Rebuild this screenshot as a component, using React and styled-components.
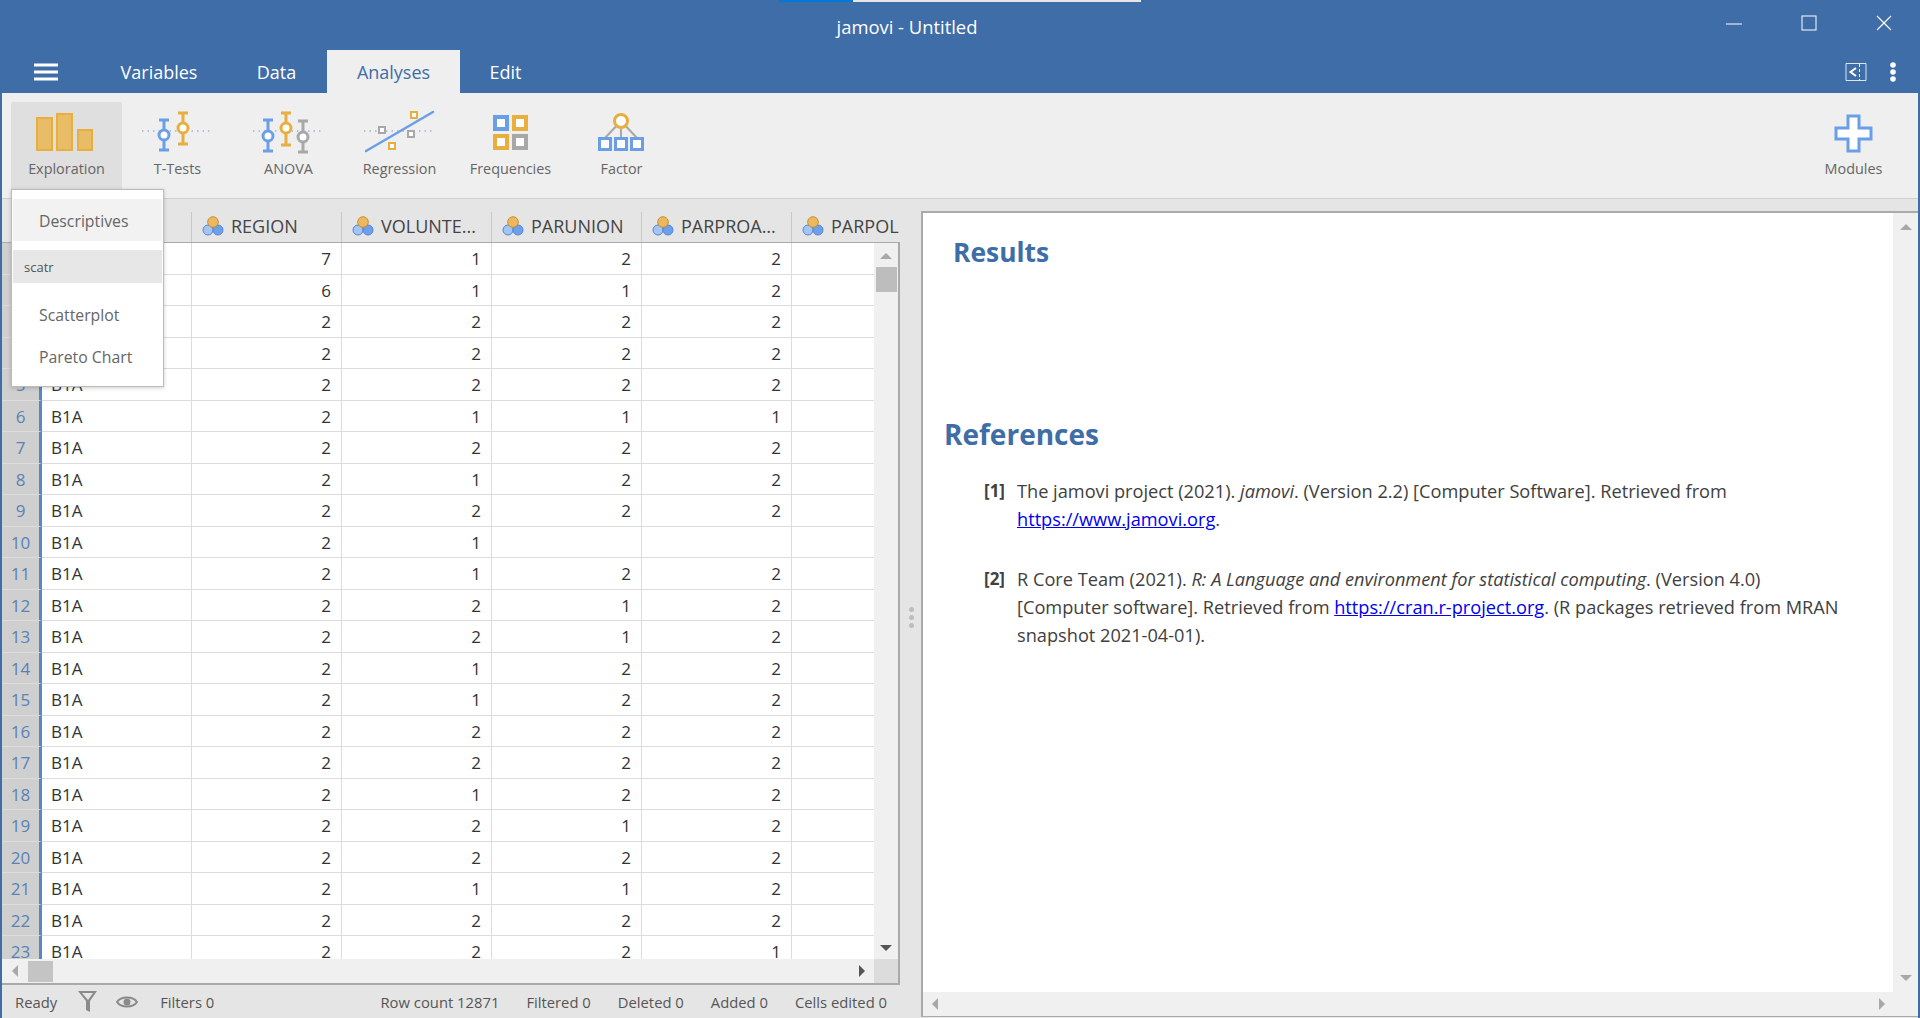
import React from 'react';
import styled, { createGlobalStyle } from 'styled-components';

const BLUE = '#3e6da8';
const FONT = `"Open Sans", "Noto Sans", sans-serif`;

const Global = createGlobalStyle`
  html, body { margin: 0; padding: 0; height: 100%; overflow: hidden; }
  body { font-family: ${FONT}; }
  * { box-sizing: border-box; }
`;

const Shell = styled.div`
  width: 1920px; height: 1018px; background: ${BLUE}; padding: 0 2px;
  display: flex; flex-direction: column; position: relative; overflow: hidden;
`;
const TitleBar = styled.div`
  height: 50px; position: relative; display: flex; align-items: center; justify-content: center;
  color: #fff; font-size: 18.4px; padding: 3px 106px 0 0;
`;
const Progress = styled.div`
  position: absolute; top: 0; left: 777px; width: 362px; height: 2px; display: flex;
`;
const ProgressPart = styled.div`
  height: 100%; width: ${p => p.$w}px; background: ${p => p.$c};
`;
const WinControls = styled.div`
  position: absolute; right: 26px; top: 15px; display: flex; gap: 59px;
`;
const TabBar = styled.div`
  height: 43px; display: flex; align-items: stretch; padding-right: 0;
`;
const Burger = styled.div`
  width: 90px; display: flex; align-items: center; padding-left: 32px;
`;
const Tab = styled.div`
  padding: 0 20px; display: flex; align-items: center; font-size: 18px; height: 43px;
  color: ${p => (p.$active ? BLUE : '#fff')};
  background: ${p => (p.$active ? '#efefef' : 'transparent')};
  width: ${p => p.$w}px; justify-content: center;
`;
const TabTools = styled.div`
  margin-left: auto; display: flex; align-items: center; gap: 23px; padding-right: 22px;
`;
const Ribbon = styled.div`
  height: 106px; flex: none; background: #efefef; display: flex; padding: 9px 9px 0 9px; border-bottom: 1px solid #cfcfcf;
`;
const RibbonButton = styled.div`
  width: 111px; height: 87px; padding-top: 3px; display: flex; flex-direction: column; align-items: center;
  background: ${p => (p.$active ? '#dfdfdf' : 'transparent')};
  border-radius: 2px 2px 0 0;
  margin-left: ${p => (p.$end ? 'auto' : '0')};
`;
const RibbonLabel = styled.div`
  font-size: 14.4px; line-height: 20px; color: #666;
`;
const Workspace = styled.div`
  flex: 1; display: flex; background: #e5e5e5; min-height: 0;
`;
const DataColumn = styled.div`
  width: 898px; display: flex; flex-direction: column;
`;
const HeaderRow = styled.div`
  margin-top: 13px; height: 30px; display: flex; overflow: hidden; flex: none;
`;
const HeaderCorner = styled.div`
  width: 40px; flex: none;
`;
const HeaderCell = styled.div`
  width: 150px; flex: none; display: flex; align-items: center; gap: 7px; padding: 0 0 2px 10px;
  border-right: 1px solid #c8c8c8; font-size: 18px; color: #444; white-space: nowrap;
`;
const TableBody = styled.div`
  height: 717px; flex: none; display: grid; grid-template-columns: 872px 24px;
  border-top: 1px solid #aaa; border-right: 2px solid #aaa; background: #fff;
`;
const RowsClip = styled.div`
  overflow: hidden; height: 716px;
`;
const Row = styled.div`
  height: 31.5px; display: flex; width: 900px;
`;
const RowNumber = styled.div`
  width: 40px; flex: none; background: #cfcfcf; border-right: 3px solid #5b86c4;
  border-bottom: 1px solid #dcdcdc; padding-top: 1px;
  color: #5a82b5; font-size: 17px; display: flex; align-items: center; justify-content: center;
`;
const Cell = styled.div`
  width: 150px; flex: none; border-right: 1px solid #dcdcdc; border-bottom: 1px solid #dcdcdc;
  color: #333; font-size: 17px; display: flex; align-items: center;
  justify-content: ${p => (p.$text ? 'flex-start' : 'flex-end')};
  padding: 1px 10px 0 ${p => (p.$text ? 9 : 10)}px;
`;
const VScroll = styled.div`
  background: #f0f0f0; display: flex; flex-direction: column; align-items: center; padding-top: 10px;
`;
const VThumb = styled.div`
  width: 21px; height: 25px; background: #bdbdbd; margin-top: 8px;
`;
const HScroll = styled.div`
  height: 26px; flex: none; display: flex; align-items: center; background: #f0f0f0; padding-left: 10px;
  border-right: 2px solid #aaa; border-bottom: 2px solid #aaa;
`;
const HThumb = styled.div`
  width: 25px; height: 21px; background: #c4c4c4; margin-left: 10px;
`;
const Corner = styled.div`
  width: 24px; height: 100%; background: #dcdcdc; margin-left: 9px;
`;
const Arrow = styled.div`
  width: 0; height: 0; flex: none;
  ${p => p.$dir === 'up' && `border-left: 6px solid transparent; border-right: 6px solid transparent; border-bottom: 6px solid ${p.$c};`}
  ${p => p.$dir === 'down' && `border-left: 6px solid transparent; border-right: 6px solid transparent; border-top: 6px solid ${p.$c};`}
  ${p => p.$dir === 'left' && `border-top: 6px solid transparent; border-bottom: 6px solid transparent; border-right: 6px solid ${p.$c};`}
  ${p => p.$dir === 'right' && `border-top: 6px solid transparent; border-bottom: 6px solid transparent; border-left: 6px solid ${p.$c};`}
  margin-top: ${p => (p.$auto === 'top' ? 'auto' : '0')};
  margin-bottom: ${p => (p.$gap || 0)}px;
  margin-left: ${p => (p.$auto === 'left' ? 'auto' : '0')};
`;
const StatusBar = styled.div`
  flex: 1; display: flex; align-items: center; padding: 0 13px; font-size: 14.8px; color: #555; white-space: nowrap;
`;
const StatusRight = styled.div`
  margin-left: auto; display: flex; gap: 27px;
`;
const StatusIcons = styled.div`
  display: flex; align-items: center; gap: 18px; margin: 0 22px 0 20px;
`;
const Splitter = styled.div`
  width: 21px; flex: none; display: flex; flex-direction: column; align-items: center; justify-content: center;
  gap: 3px; padding: 18px 0 0 2px;
`;
const Dot = styled.div`
  width: 5px; height: 5px; border-radius: 50%; background: #bdbdbd;
`;
const ResultsPanel = styled.div`
  margin-top: 12px; height: 806px; width: 997px; background: #fff; flex: none;
  border: 2px solid #aaa; border-right: none; border-bottom-width: 1px;
  display: grid; grid-template-columns: 1fr 25px; grid-template-rows: 1fr 24px;
`;
const ResultsBody = styled.div`
  padding: 22px 0 0 21px; overflow: hidden;
`;
const Heading = styled.h1`
  margin: 0 0 ${p => p.$after}px ${p => p.$indent}px; font-size: ${p => p.$size}px; line-height: 34px; font-weight: 700; color: ${BLUE};
`;
const RefItem = styled.div`
  display: flex; margin: 0 0 32px 40px; font-size: 18.2px; line-height: 28px; color: #404040; white-space: nowrap;
`;
const RefNum = styled.div`
  width: 33px; font-weight: 700; flex: none; font-size: 17px;
`;
const RefLink = styled.a`
  color: #0000ee; text-decoration: underline;
`;
const RVScroll = styled.div`
  background: #f0f0f0; display: flex; flex-direction: column; align-items: center; padding: 11px 0 11px;
`;
const RHScroll = styled.div`
  grid-column: 1 / 3; background: #f0f0f0; display: flex; align-items: center; padding: 0 33px 0 9px;
`;
const Menu = styled.div`
  position: absolute; left: 11px; top: 189px; width: 153px; height: 198px; background: #fff;
  border: 1px solid #bbb; box-shadow: 0 1px 4px rgba(0,0,0,.2); padding: 9px 1px 0;
  display: flex; flex-direction: column;
`;
const MenuItem = styled.div`
  height: 42px; flex: none; display: flex; align-items: center; padding: 1px 0 0 26px; font-size: 15.8px; color: #666;
  background: ${p => (p.$active ? '#f2f2f2' : 'transparent')};
`;
const MenuGroup = styled.div`
  height: 33px; flex: none; display: flex; align-items: center; padding-left: 11px; font-size: 13px; color: #555;
  background: #e7e7e7; margin: 9px 0 10px;
`;

const O = '#e8ae3e', B = '#6a9fe8', G = '#a8a8a8';

const Whisker = ({ x, t, b, c, cy }) => (
  <g>
    <path d={`M${x - 5} ${t}H${x + 5}M${x} ${t}V${b}M${x - 5} ${b}H${x + 5}`} stroke={c} strokeWidth="3" fill="none" />
    <circle cx={x} cy={cy} r="5" fill="#fff" stroke={c} strokeWidth="3" />
  </g>
);
const Dotted = ({ y = 26 }) => <path d={`M20 ${y}H90`} stroke="#7a9cc6" strokeWidth="1" strokeDasharray="1.5 4" />;
const Ico = ({ children, h = 54, w = 111, vb }) => (
  <svg width={w} height={h} viewBox={vb || `0 0 ${w} ${h}`} fill="none">{children}</svg>
);
const Sq = ({ x, y, s, c, sw }) => (
  <rect x={x + sw / 2} y={y + sw / 2} width={s - sw} height={s - sw} fill="#fff" stroke={c} strokeWidth={sw} />
);

const ExplorationIcon = () => (
  <Ico>
    <rect x="26" y="13" width="15" height="32" fill="#e9bd68" stroke={O} strokeWidth="2" />
    <rect x="46" y="9" width="15" height="36" fill="#e9bd68" stroke={O} strokeWidth="2" />
    <rect x="67" y="25" width="14" height="20" fill="#e9bd68" stroke={O} strokeWidth="2" />
  </Ico>
);
const TTestIcon = () => (
  <Ico>
    <Dotted />
    <Whisker x={42} t={15} b={45} c={B} cy={30} />
    <Whisker x={61} t={8} b={39} c={O} cy={23} />
  </Ico>
);
const AnovaIcon = () => (
  <Ico>
    <Dotted />
    <Whisker x={35} t={15} b={46} c={B} cy={31} />
    <Whisker x={53} t={8} b={40} c={O} cy={23} />
    <Whisker x={70} t={16} b={47} c={G} cy={32} />
  </Ico>
);
const RegressionIcon = () => (
  <Ico>
    <Dotted />
    <Sq x={34} y={21} s={8} c={G} sw={2} />
    <Sq x={66} y={6} s={8} c={O} sw={2} />
    <Sq x={63} y={25} s={8} c={G} sw={2} />
    <Sq x={44} y={37} s={8} c={O} sw={2} />
    <path d="M22 46L89 7" stroke={B} strokeWidth="2.5" strokeLinecap="round" />
  </Ico>
);
const FrequenciesIcon = () => (
  <Ico>
    <Sq x={38} y={10} s={16} c={B} sw={4} />
    <Sq x={57} y={10} s={16} c={O} sw={4} />
    <Sq x={38} y={29} s={16} c={O} sw={4} />
    <Sq x={57} y={29} s={16} c={G} sw={4} />
  </Ico>
);
const FactorIcon = () => (
  <Ico>
    <path d="M55 16L39 33M55 16V33M55 16L71 33" stroke={G} strokeWidth="2" />
    <circle cx="55" cy="16" r="6.5" fill="#fff" stroke={O} strokeWidth="3" />
    <Sq x={32} y={32} s={14} c={B} sw={3} />
    <Sq x={48} y={32} s={14} c={B} sw={3} />
    <Sq x={64} y={32} s={14} c={B} sw={3} />
  </Ico>
);
const ModulesIcon = () => (
  <Ico>
    <path d="M50 11H61V23H73V34H61V46H50V34H38V23H50Z" fill="#fff" stroke={B} strokeWidth="3" />
  </Ico>
);

const VarIconSvg = styled.svg`
  flex: none;
`;
const VarIcon = () => (
  <VarIconSvg width="22" height="21" viewBox="0 0 22 21">
    <circle cx="6" cy="14" r="5" fill="#a6c4f0" stroke="#4f86dc" strokeWidth="1" />
    <circle cx="16" cy="14" r="5" fill="#6f9fe6" stroke="#4f86dc" strokeWidth="1" />
    <circle cx="11" cy="6" r="5.3" fill="#ebb860" stroke="#c98f2c" strokeWidth="1" />
  </VarIconSvg>
);

const Hamburger = () => (
  <svg width="24" height="18" viewBox="0 0 24 18">
    <path d="M0 2H24M0 9H24M0 16H24" stroke="#fff" strokeWidth="3" />
  </svg>
);
const SplitIcon = () => (
  <svg width="22" height="20" viewBox="0 0 22 20" fill="none">
    <path d="M1 1.5H21V18.5H1Z" stroke="#dfe6f0" strokeWidth="1" />
    <path d="M11 6L5.5 10L11 14" stroke="#fff" strokeWidth="2" />
    <path d="M14.5 2V18" stroke="#fff" strokeWidth="1" strokeDasharray="3 2" />
  </svg>
);
const MoreIcon = () => (
  <svg width="6" height="20" viewBox="0 0 6 20">
    <circle cx="3" cy="3" r="2.8" fill="#fff" />
    <circle cx="3" cy="10" r="2.8" fill="#fff" />
    <circle cx="3" cy="17" r="2.8" fill="#fff" />
  </svg>
);
const MinIcon = () => (
  <svg width="16" height="16" viewBox="0 0 16 16"><path d="M0 9H16" stroke="#fff" strokeWidth="1" /></svg>
);
const MaxIcon = () => (
  <svg width="16" height="16" viewBox="0 0 16 16" fill="none"><rect x="1" y="1" width="14" height="14" stroke="#fff" strokeWidth="1" /></svg>
);
const CloseIcon = () => (
  <svg width="16" height="16" viewBox="0 0 16 16"><path d="M1 1L15 15M15 1L1 15" stroke="#fff" strokeWidth="1.2" /></svg>
);
const FunnelIcon = () => (
  <svg width="21" height="23" viewBox="0 0 21 23">
    <path d="M1 1H20L13 11V22L9 20V11Z" fill="#8a8a8a" />
    <path d="M5 3H16L11 10Z" fill="#e5e5e5" />
  </svg>
);
const EyeIcon = () => (
  <svg width="22" height="14" viewBox="0 0 22 14" fill="none">
    <path d="M1 7C5 1 17 1 21 7C17 13 5 13 1 7Z" stroke="#8a8a8a" strokeWidth="2" />
    <circle cx="11" cy="7" r="3.5" fill="#8a8a8a" />
  </svg>
);

const BUTTONS = [
  ['Exploration', ExplorationIcon, true],
  ['T-Tests', TTestIcon],
  ['ANOVA', AnovaIcon],
  ['Regression', RegressionIcon],
  ['Frequencies', FrequenciesIcon],
  ['Factor', FactorIcon],
];
const TABS = [['Variables', 134], ['Data', 101], ['Analyses', 133, true], ['Edit', 91]];
const COLS = ['REGION', 'VOLUNTE...', 'PARUNION', 'PARPROA...', 'PARPOL'];
const DATA = [
  '7122', '6112', '2222', '2222', '2222', '2111', '2222', '2122', '2222', '21  ', '2122', '2212',
  '2212', '2122', '2122', '2222', '2222', '2122', '2212', '2222', '2112', '2222', '2221',
];

export default function App() {
  return (
    <Shell>
      <Global />
      <TitleBar>
        <Progress>
          <ProgressPart $w={74} $c="#0078d4" />
          <ProgressPart $w={290} $c="#e6e6e6" />
        </Progress>
        jamovi - Untitled
        <WinControls><MinIcon /><MaxIcon /><CloseIcon /></WinControls>
      </TitleBar>
      <TabBar>
        <Burger><Hamburger /></Burger>
        {TABS.map(([t, w, a]) => <Tab key={t} $w={w} $active={a}>{t}</Tab>)}
        <TabTools><SplitIcon /><MoreIcon /></TabTools>
      </TabBar>
      <Ribbon>
        {BUTTONS.map(([label, Icon, active]) => (
          <RibbonButton key={label} $active={active}>
            <Icon />
            <RibbonLabel>{label}</RibbonLabel>
          </RibbonButton>
        ))}
        <RibbonButton $end>
          <ModulesIcon />
          <RibbonLabel>Modules</RibbonLabel>
        </RibbonButton>
      </Ribbon>
      <Workspace>
        <DataColumn>
          <HeaderRow>
            <HeaderCorner />
            <HeaderCell />
            {COLS.map(c => <HeaderCell key={c}><VarIcon />{c}</HeaderCell>)}
          </HeaderRow>
          <TableBody>
            <RowsClip>
              {DATA.map((r, i) => (
                <Row key={i}>
                  <RowNumber>{i + 1}</RowNumber>
                  <Cell $text>B1A</Cell>
                  {r.split('').map((v, j) => <Cell key={j}>{v.trim()}</Cell>)}
                  <Cell />
                </Row>
              ))}
            </RowsClip>
            <VScroll>
              <Arrow $dir="up" $c="#a8a8a8" />
              <VThumb />
              <Arrow $dir="down" $c="#555" $auto="top" $gap={8} />
            </VScroll>
          </TableBody>
          <HScroll>
            <Arrow $dir="left" $c="#a8a8a8" />
            <HThumb />
            <Arrow $dir="right" $c="#555" $auto="left" />
            <Corner />
          </HScroll>
          <StatusBar>
            Ready
            <StatusIcons><FunnelIcon /><EyeIcon /></StatusIcons>
            Filters 0
            <StatusRight>
              <span>Row count 12871</span>
              <span>Filtered 0</span>
              <span>Deleted 0</span>
              <span>Added 0</span>
              <span>Cells edited 0</span>
            </StatusRight>
          </StatusBar>
        </DataColumn>
        <Splitter><Dot /><Dot /><Dot /></Splitter>
        <ResultsPanel>
          <ResultsBody>
            <Heading $indent={9} $after={148} $size={26.4}>Results</Heading>
            <Heading $indent={0} $after={26} $size={28}>References</Heading>
            <RefItem>
              <RefNum>[1]</RefNum>
              <div>
                The jamovi project (2021). <i>jamovi</i>. (Version 2.2) [Computer Software]. Retrieved from<br />
                <RefLink>https://www.jamovi.org</RefLink>.
              </div>
            </RefItem>
            <RefItem>
              <RefNum>[2]</RefNum>
              <div>
                R Core Team (2021). <i>R: A Language and environment for statistical computing</i>. (Version 4.0)<br />
                [Computer software]. Retrieved from <RefLink>https://cran.r-project.org</RefLink>. (R packages retrieved from MRAN<br />
                snapshot 2021-04-01).
              </div>
            </RefItem>
          </ResultsBody>
          <RVScroll>
            <Arrow $dir="up" $c="#a8a8a8" />
            <Arrow $dir="down" $c="#a8a8a8" $auto="top" />
          </RVScroll>
          <RHScroll>
            <Arrow $dir="left" $c="#a8a8a8" />
            <Arrow $dir="right" $c="#a8a8a8" $auto="left" />
          </RHScroll>
        </ResultsPanel>
      </Workspace>
      <Menu>
        <MenuItem $active>Descriptives</MenuItem>
        <MenuGroup>scatr</MenuGroup>
        <MenuItem>Scatterplot</MenuItem>
        <MenuItem>Pareto Chart</MenuItem>
      </Menu>
    </Shell>
  );
}
